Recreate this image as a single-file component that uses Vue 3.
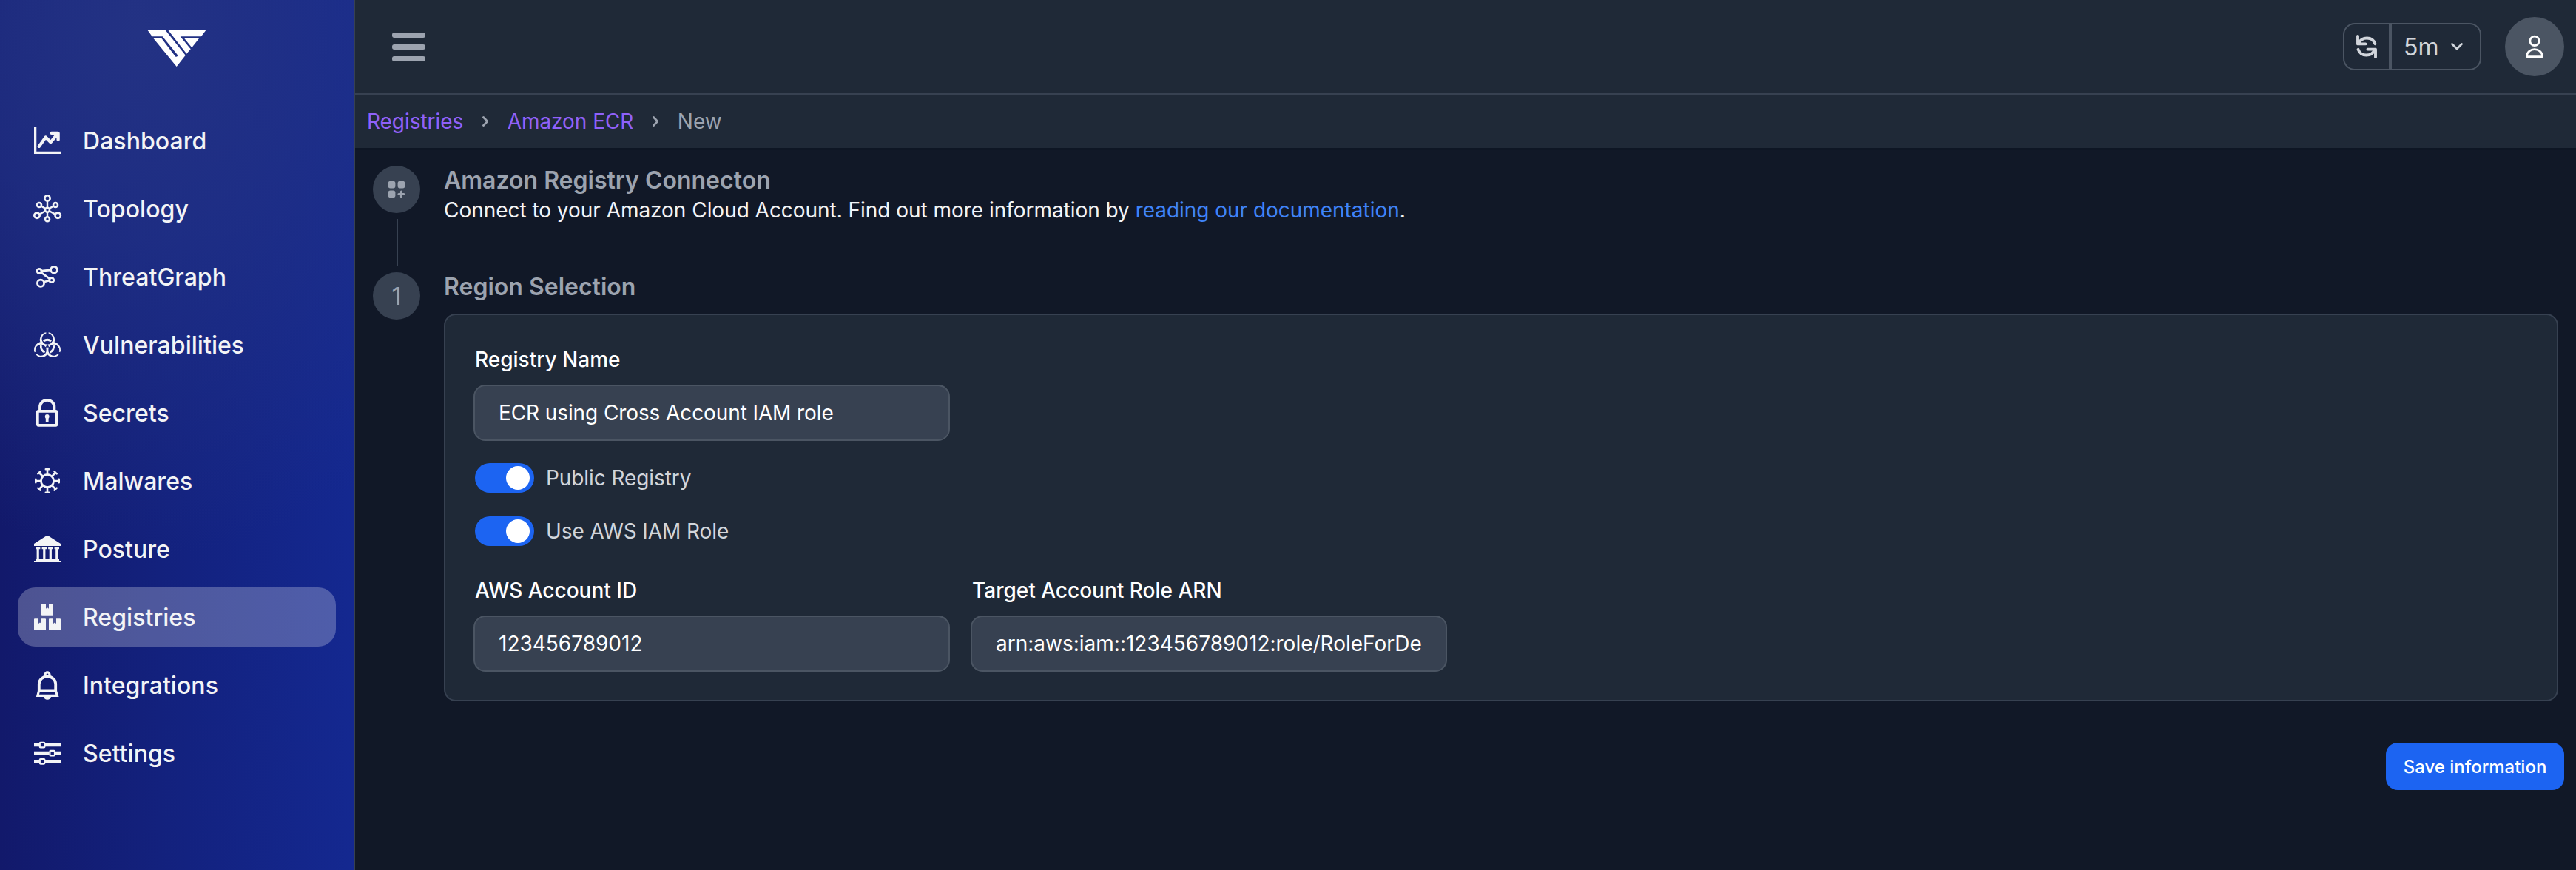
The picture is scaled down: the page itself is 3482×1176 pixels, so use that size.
<script setup>
import { ref } from 'vue'

const navItems = [
  { id: 'dashboard', label: 'Dashboard' },
  { id: 'topology', label: 'Topology' },
  { id: 'threatgraph', label: 'ThreatGraph' },
  { id: 'vulnerabilities', label: 'Vulnerabilities' },
  { id: 'secrets', label: 'Secrets' },
  { id: 'malwares', label: 'Malwares' },
  { id: 'posture', label: 'Posture' },
  { id: 'registries', label: 'Registries' },
  { id: 'integrations', label: 'Integrations' },
  { id: 'settings', label: 'Settings' },
]
const active = ref('registries')

const hubNodes = [
  [18, 4, 3.7],
  [18, 19.7, 3],
  [7, 13, 3],
  [29, 13, 3],
  [4, 27.3, 3.7],
  [32.2, 27.3, 3.7],
  [18, 32.3, 3],
]
const registryName = ref('ECR using Cross Account IAM role')
const accountId = ref('123456789012')
const roleArn = ref('arn:aws:iam::123456789012:role/RoleForDe')
const toggles = ref([
  { label: 'Public Registry', on: true },
  { label: 'Use AWS IAM Role', on: true },
])
</script>

<template>
  <div class="app">
    <aside class="sidebar">
      <div class="brand">
        <svg width="80" height="50" viewBox="0 0 80 50" fill="#fff">
          <path d="M0 0H24L51.7 34.7L39.7 50L8.3 11.7H19.3L38.2 36.4Q40 37.6 41.6 35L20.7 9.3H6.6Z" />
          <path d="M27.7 0H80L73 9.2H44.7L58.7 26.3L53.3 32.7Z" />
          <path d="M50.3 12H70L60.3 24.2Z" />
        </svg>
      </div>
      <nav class="nav">
        <a v-for="item in navItems" :key="item.id" class="nav-item" :class="{ active: item.id === active }">
          <svg v-if="item.id === 'dashboard'" class="icon clipped" viewBox="0 0 16 16" fill="currentColor" stroke="currentColor" stroke-width=".9">
            <path d="M0 0h1v15h15v1H0zm10 3.5a.5.5 0 0 1 .5-.5h4a.5.5 0 0 1 .5.5v4a.5.5 0 0 1-1 0V4.9l-3.613 4.417a.5.5 0 0 1-.74.037L7.06 6.767l-3.656 5.027a.5.5 0 0 1-.808-.588l4-5.5a.5.5 0 0 1 .758-.06l2.609 2.61L13.445 4H10.5a.5.5 0 0 1-.5-.5" />
          </svg>
          <svg v-else-if="item.id === 'topology'" class="icon" viewBox="0 0 36 36" fill="none" stroke="currentColor" stroke-width="2.6">
            <path d="M18 8v8.5M18 23v6M9.8 14.6l5.4 3.2M26.2 14.6l-5.4 3.2M7.4 25.6l7.8-4.4M28.6 25.6l-7.8-4.4" stroke-width="2.4" />
            <circle v-for="(n, i) in hubNodes" :key="i" :cx="n[0]" :cy="n[1]" :r="n[2]" />
          </svg>
          <svg v-else-if="item.id === 'threatgraph'" class="icon" viewBox="0 0 36 36" fill="none" stroke="currentColor" stroke-width="2.8">
            <path d="M10.2 10.2L22 9M9.8 12.4L21.2 20.8M14 25l6.5-1.8" />
            <circle cx="7" cy="10.3" r="3" />
            <circle cx="27" cy="8.7" r="4.4" />
            <circle cx="23.7" cy="22.7" r="3" />
            <circle cx="9" cy="26.7" r="4.6" />
          </svg>
          <svg v-else-if="item.id === 'vulnerabilities'" class="icon" viewBox="0 0 36 36" fill="currentColor">
            <defs>
              <mask id="hazard-cut" maskUnits="userSpaceOnUse" x="-20" y="-22" width="40" height="40">
                <rect x="-20" y="-22" width="40" height="40" fill="#fff" />
                <g v-for="a in [0, 120, 240]" :key="a" :transform="`rotate(${a})`" fill="#000">
                  <circle cx="0" cy="-10.1" r="7.5" />
                  <rect x="-1.6" y="-21" width="3.2" height="6" />
                  <rect x="-.5" y="-5" width="1" height="5" />
                </g>
                <circle r="1.6" fill="#000" />
              </mask>
            </defs>
            <g transform="translate(18 20.2)">
              <g mask="url(#hazard-cut)">
                <circle v-for="a in [0, 120, 240]" :key="a" :transform="`rotate(${a})`" cx="0" cy="-9" r="10.3" />
              </g>
              <path v-for="a in [0, 120, 240]" :key="a" :transform="`rotate(${a})`" d="M-5.2 -7A8.8 8.8 0 0 1 5.2 -7" fill="none" stroke="currentColor" stroke-width="2.8" />
            </g>
          </svg>
          <svg v-else-if="item.id === 'secrets'" class="icon" viewBox="0 0 36 36" fill="none" stroke="currentColor" stroke-width="3.8">
            <rect x="4.8" y="15.8" width="25.8" height="19" rx="1.2" />
            <path d="M8 15V10a9.7 9.2 0 0 1 19.4 0V15" />
            <circle cx="17.7" cy="23" r="2.9" fill="currentColor" stroke="none" />
            <path d="M17.7 24v6" />
          </svg>
          <svg v-else-if="item.id === 'malwares'" class="icon" viewBox="0 0 36 36" fill="none" stroke="currentColor" stroke-width="2.8">
            <circle cx="18" cy="18" r="8.6" />
            <path v-for="a in 8" :key="a" :transform="`rotate(${a * 45} 18 18)`" d="M18 9.5V2.4M15.8 2.3h4.4" stroke-linecap="round" stroke-width="2.6" />
          </svg>
          <svg v-else-if="item.id === 'posture'" class="icon" viewBox="0 0 36 36" fill="currentColor">
            <path d="M16.4 .6Q18 -.5 19.6 .6L36 11V14H0V11Z" />
            <path v-for="x in [5.2, 13.8, 22.3, 30.8]" :key="x" :transform="`translate(${x} 0)`" d="M-3.2 16h6.4v2.2h-1.6V32h-3.2V18.2h-1.6z" />
            <path d="M2 31.7h32V34h2v2H0v-2h2z" />
          </svg>
          <svg v-else-if="item.id === 'registries'" class="icon" viewBox="0 0 576 512" preserveAspectRatio="none" fill="currentColor">
            <path d="M560 288h-80v96l-32-21.3-32 21.3v-96h-80c-8.8 0-16 7.2-16 16v192c0 8.8 7.2 16 16 16h224c8.8 0 16-7.2 16-16V304c0-8.8-7.2-16-16-16zm-384-64h224c8.8 0 16-7.2 16-16V16c0-8.8-7.2-16-16-16h-80v96l-32-21.3L256 96V0h-80c-8.8 0-16 7.2-16 16v192c0 8.8 7.2 16 16 16zm64 64h-80v96l-32-21.3L96 384v-96H16c-8.8 0-16 7.2-16 16v192c0 8.8 7.2 16 16 16h224c8.8 0 16-7.2 16-16V304c0-8.8-7.2-16-16-16z" />
          </svg>
          <svg v-else-if="item.id === 'integrations'" class="icon" viewBox="0 0 36 36" fill="none" stroke="currentColor" stroke-width="3.2">
            <circle cx="18" cy="3.9" r="3" />
            <path d="M6.8 26V16.5a11.2 10 0 0 1 22.4 0V26" stroke-width="3.8" />
            <path d="M6.5 26H29.5L31.4 32.4H4.9Z" />
            <path d="M13 33.5a5 4.2 0 0 0 10 0z" fill="currentColor" stroke="none" />
          </svg>
          <svg v-else class="icon" viewBox="0 0 36 36" fill="none" stroke="currentColor" stroke-width="4.6">
            <path d="M0 7h7M15 7h21M0 18.1h20.5M29 18.1h7M0 29.3h7M15 29.3h21" />
            <g stroke-width="2.2">
              <rect x="7.8" y="3.8" width="6.6" height="6.6" rx="1" />
              <rect x="21.4" y="14.8" width="6.6" height="6.6" rx="1" />
              <rect x="7.8" y="26" width="6.6" height="6.6" rx="1" />
            </g>
          </svg>
          <span>{{ item.label }}</span>
        </a>
      </nav>
    </aside>

    <div class="main">
      <header class="topbar">
        <button class="menu" aria-label="Menu"><i></i><i></i><i></i></button>
        <div class="tools">
          <div class="refresh">
            <button class="refresh-now" aria-label="Refresh">
              <svg width="28" height="32" viewBox="0 0 28 32" fill="none" stroke="currentColor" stroke-width="3.9" stroke-linecap="round" stroke-linejoin="round">
                <path d="M2 2V12.4H12.5M3.2 11.4C7.5 2.4 21.6 1.6 25.4 12.2" />
                <path d="M26 30.2V19.6H15.5M24.8 20.6C20.5 29.6 6.4 30.4 2.6 19.8" />
              </svg>
            </button>
            <button class="interval">
              <span>5m</span>
              <svg width="16" height="10" viewBox="0 0 16 10" fill="none" stroke="currentColor" stroke-width="2.8" stroke-linecap="round" stroke-linejoin="round">
                <path d="M1.5 1.6L8 8.1L14.5 1.6" />
              </svg>
            </button>
          </div>
          <div class="avatar">
            <svg width="24" height="32" viewBox="0 0 24 32" fill="none" stroke="currentColor" stroke-width="2.8" stroke-linejoin="round">
              <circle cx="12" cy="8.4" r="6.2" />
              <path d="M1.5 29.6V28.6C3 16.6 21 16.6 22.5 28.6V29.6Z" />
            </svg>
          </div>
        </div>
      </header>

      <div class="crumbs">
        <a>Registries</a>
        <svg class="sep" width="8" height="14" viewBox="0 0 8 14"><path d="M1.5 1.5L6.8 7L1.5 12.5" /></svg>
        <a>Amazon ECR</a>
        <svg class="sep" width="8" height="14" viewBox="0 0 8 14"><path d="M1.5 1.5L6.8 7L1.5 12.5" /></svg>
        <span>New</span>
      </div>

      <main class="content">
        <section class="step intro">
          <div class="rail">
            <div class="badge">
              <svg width="24" height="24" viewBox="0 0 24 24" fill="currentColor">
                <rect x=".7" y=".7" width="9.7" height="9.7" rx="3" />
                <rect x="13.6" y=".7" width="9.7" height="9.7" rx="3" />
                <rect x=".7" y="13.5" width="9.7" height="9.7" rx="3" />
                <path d="M18.4 15v7M14.9 18.5h7" fill="none" stroke="currentColor" stroke-width="3" stroke-linecap="round" />
              </svg>
            </div>
            <div class="line"></div>
          </div>
          <div class="step-body">
            <h2>Amazon Registry Connecton</h2>
            <p>Connect to your Amazon Cloud Account. Find out more information by <a>reading our documentation</a>.</p>
          </div>
        </section>

        <section class="step">
          <div class="rail"><div class="badge">1</div></div>
          <div class="step-body">
            <h2>Region Selection</h2>
            <form class="card">
              <div class="field">
                <label>Registry Name</label>
                <input v-model="registryName" class="name" type="text" />
              </div>
              <div v-for="t in toggles" :key="t.label" class="toggle-row">
                <div class="toggle" :class="{ on: t.on }"><div class="knob"></div></div>
                <span>{{ t.label }}</span>
              </div>
              <div class="field-row">
                <div class="field">
                  <label>AWS Account ID</label>
                  <input v-model="accountId" type="text" />
                </div>
                <div class="field">
                  <label>Target Account Role ARN</label>
                  <input v-model="roleArn" type="text" />
                </div>
              </div>
            </form>
          </div>
        </section>

        <div class="actions"><button class="save">Save information</button></div>
      </main>
    </div>
  </div>
</template>

<style>
body {
  margin: 0;
  background: #111827;
}
</style>

<style scoped>
* {
  box-sizing: border-box;
}
button,
input {
  font: inherit;
  color: inherit;
  background: none;
  border: 0;
  padding: 0;
  margin: 0;
  outline: none;
}
.app {
  display: flex;
  width: 3482px;
  height: 1176px;
  overflow: hidden;
  background: #111827;
  font-family: Inter, 'Liberation Sans', sans-serif;
  font-size: 28px;
}
.sidebar {
  flex: none;
  width: 480px;
  border-right: 2px solid #374151;
  background:
    radial-gradient(120% 60% at 40% 4%, rgba(36, 51, 132, 0.95) 0, rgba(34, 50, 134, 0.7) 40%, rgba(26, 42, 138, 0) 100%) padding-box,
    linear-gradient(to right, #12196b 0, #13217d 45%, #142890 100%) padding-box,
    #374151;
}
.brand {
  display: flex;
  justify-content: center;
  height: 150px;
  padding-top: 40px;
}
.nav {
  display: flex;
  flex-direction: column;
  gap: 12px;
  padding: 0 24px;
}
.nav-item {
  display: flex;
  align-items: center;
  gap: 30px;
  height: 80px;
  padding: 0 22px;
  border-radius: 24px;
  color: #f3f4f6;
  font-size: 32px;
  font-weight: 500;
  letter-spacing: 0.05px;
}
.nav-item.active {
  background: rgba(255, 255, 255, 0.25);
}
.icon {
  flex: none;
  width: 36px;
  height: 36px;
  overflow: visible;
}
.icon.clipped {
  overflow: hidden;
}
.main {
  flex: 1;
  min-width: 0;
}
.topbar {
  display: flex;
  align-items: center;
  justify-content: space-between;
  height: 128px;
  padding: 0 16px 0 50px;
  border-bottom: 2px solid #374151;
  background: #1f2937;
}
.menu {
  display: flex;
  flex-direction: column;
  gap: 9px;
}
.menu i {
  width: 45px;
  height: 7px;
  border-radius: 3px;
  background: #9ca3af;
}
.tools {
  display: flex;
  align-items: center;
  gap: 32px;
}
.refresh {
  display: flex;
  height: 64px;
  color: #d1d5db;
  font-size: 32px;
}
.refresh-now,
.interval {
  display: flex;
  align-items: center;
  border: 2px solid #4b5563;
}
.refresh-now {
  width: 64px;
  padding-left: 16px;
  border-radius: 16px 0 0 16px;
}
.interval {
  gap: 17px;
  width: 123px;
  padding-left: 16px;
  border-radius: 0 16px 16px 0;
}
.avatar {
  display: flex;
  align-items: center;
  justify-content: center;
  width: 80px;
  height: 80px;
  border-radius: 50%;
  background: #4b5563;
  color: #fff;
}
.crumbs {
  display: flex;
  align-items: center;
  height: 72px;
  padding-left: 16px;
  background: #1f2937;
  box-shadow: 0 3px 0 #0e1624;
  color: #9ca3af;
  letter-spacing: -0.05px;
}
.crumbs a {
  color: #9061f9;
}
.sep {
  margin: 0 25.5px 0 26px;
  fill: none;
  stroke: #9ca3af;
  stroke-width: 2.8;
  stroke-linecap: round;
  stroke-linejoin: round;
}
.content {
  padding: 24px 16px 0 24px;
}
.step {
  display: flex;
  gap: 32px;
  padding-right: 8px;
}
.intro {
  height: 144px;
}
.rail {
  display: flex;
  flex-direction: column;
  align-items: center;
  gap: 8px;
  width: 64px;
}
.badge {
  display: flex;
  align-items: center;
  justify-content: center;
  width: 64px;
  height: 64px;
  border-radius: 50%;
  background: #374151;
  color: #9ca3af;
  font-size: 32px;
}
.line {
  width: 2px;
  height: 64px;
  margin-left: 2px;
  background: #374151;
}
.step-body {
  flex: 1;
}
h2 {
  margin: 0;
  color: #9ca3af;
  font-size: 32px;
  font-weight: 600;
  line-height: 40px;
}
p {
  margin: 0;
  color: #f3f4f6;
  line-height: 40px;
  letter-spacing: -0.035px;
}
p a {
  color: #3f83f8;
}
.card {
  height: 524px;
  margin-top: 16px;
  padding: 46px 38px 0;
  border: 2px solid #374151;
  border-radius: 16px;
  background: #1f2937;
}
.field {
  display: flex;
  flex-direction: column;
  gap: 20px;
  width: 644px;
}
.field label {
  padding-left: 2px;
  color: #fff;
  font-weight: 500;
  line-height: 28px;
}
.field input {
  width: 100%;
  height: 76px;
  padding: 0 32px 0 32px;
  border: 2px solid #4b5563;
  border-radius: 16px;
  background: #374151;
  color: #fff;
}
.field input.name {
  letter-spacing: -0.1px;
}
.toggle-row {
  display: flex;
  align-items: center;
  gap: 16px;
  height: 40px;
  margin: 30px 0 0 2px;
  color: #d1d5db;
  letter-spacing: -0.08px;
}
.toggle-row + .toggle-row {
  margin-top: 32px;
}
.toggle {
  display: flex;
  align-items: center;
  width: 80px;
  height: 40px;
  padding: 0 6px;
  border-radius: 20px;
  background: #4b5563;
}
.toggle.on {
  justify-content: flex-end;
  background: #1c64f2;
}
.knob {
  width: 32px;
  height: 32px;
  border-radius: 50%;
  background: #fff;
}
.field-row {
  display: flex;
  gap: 28px;
  margin-top: 46px;
}
.actions {
  display: flex;
  justify-content: flex-end;
  margin-top: 56px;
}
.save {
  width: 241px;
  height: 64px;
  border-radius: 16px;
  background: #1c64f2;
  color: #fff;
  font-size: 24px;
  font-weight: 500;
}
</style>
